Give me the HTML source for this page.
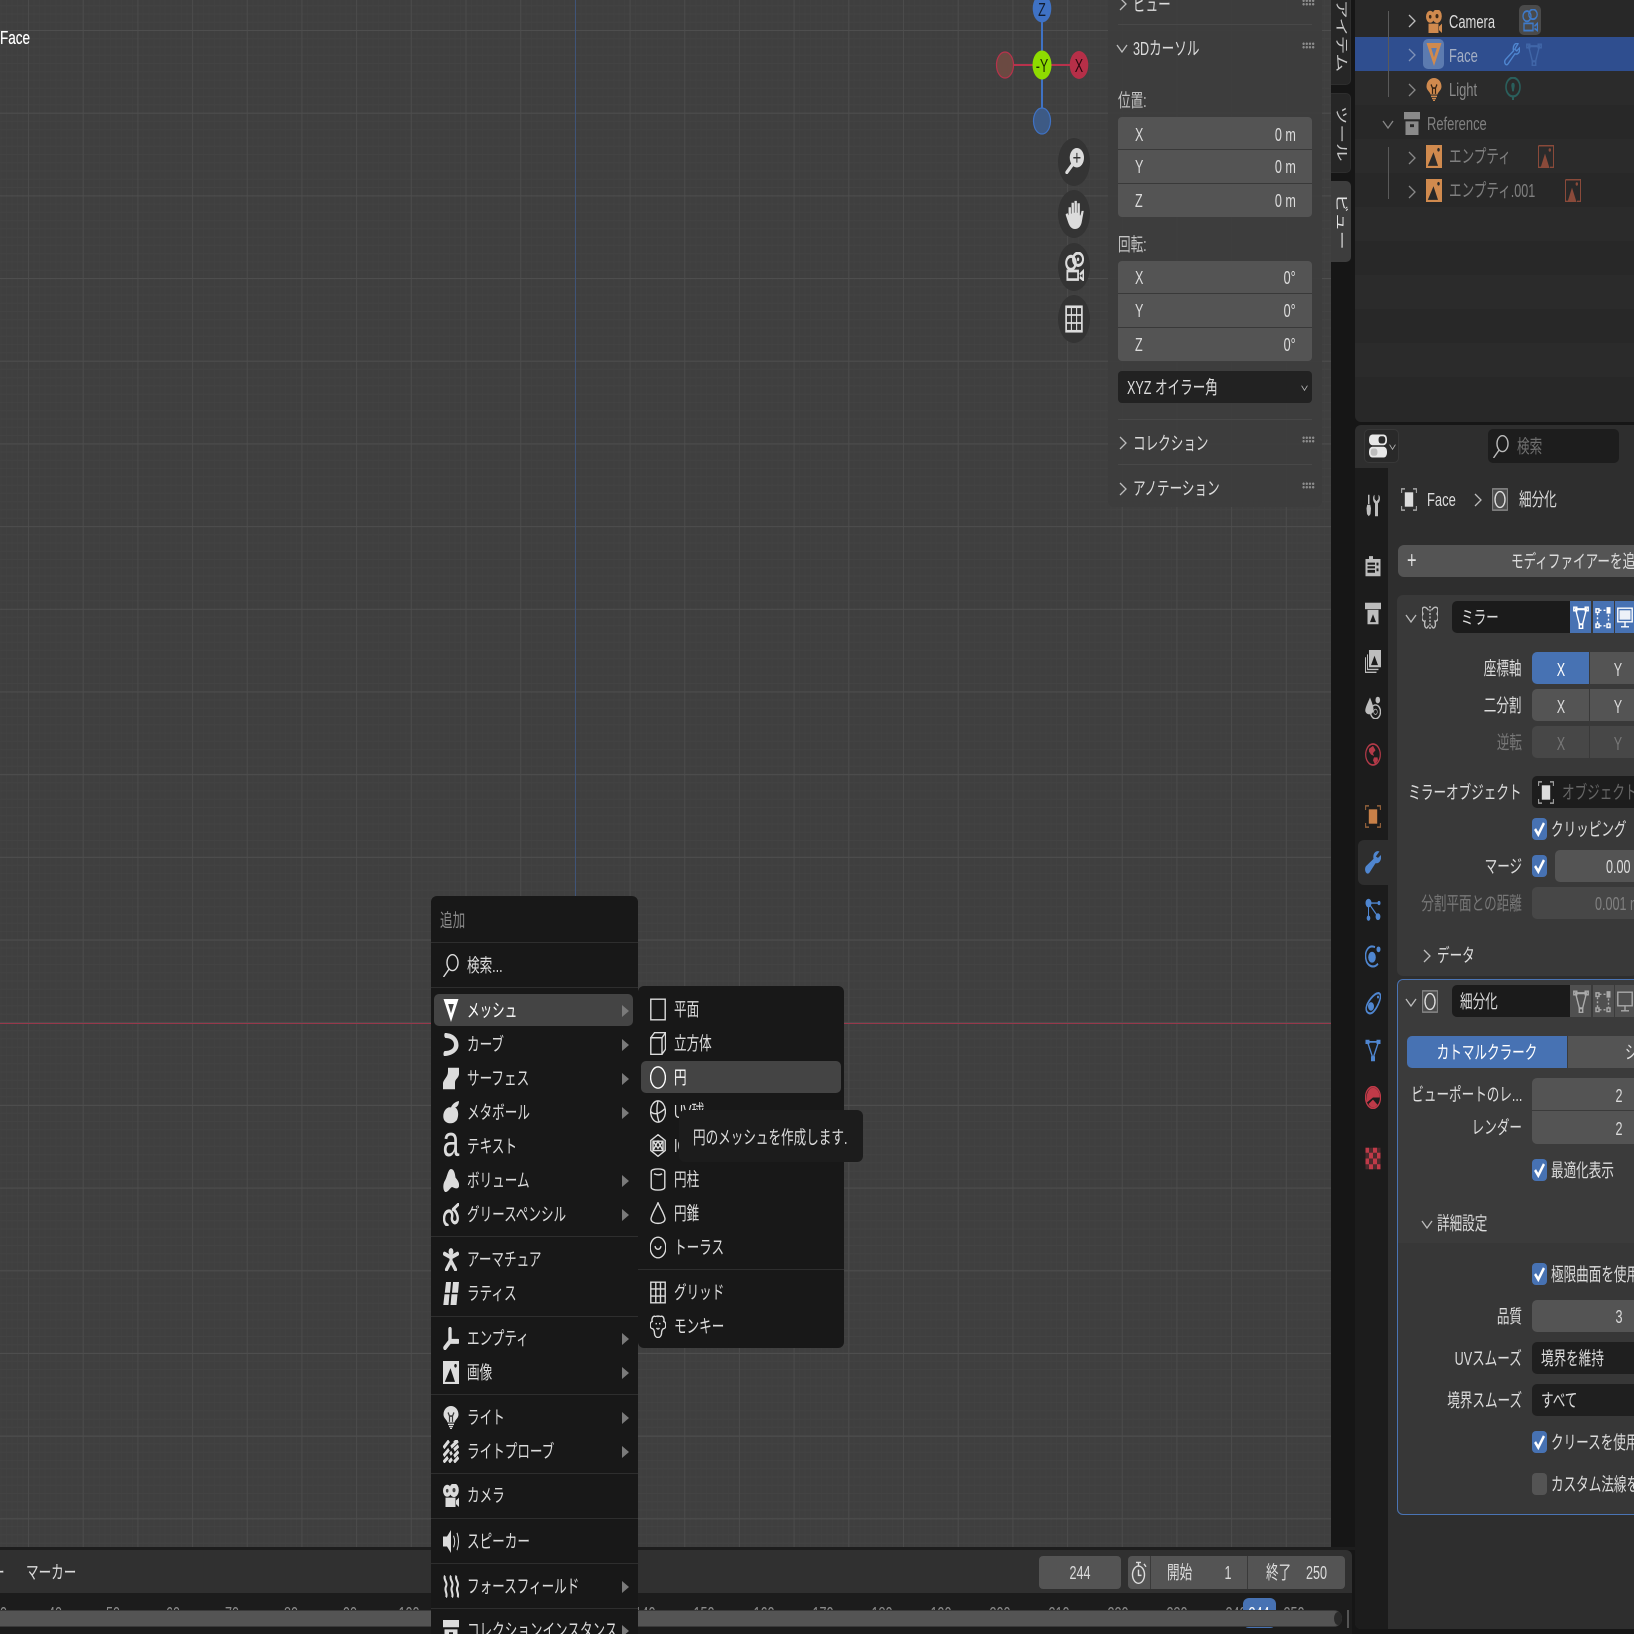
<!DOCTYPE html>
<html lang="ja"><head><meta charset="utf-8"><title>Blender</title>
<style>
html,body{margin:0;padding:0;background:#161616}
#p{position:relative;width:1634px;height:1634px;overflow:hidden;background:#161616;font-family:"Liberation Sans","Noto Sans CJK JP",sans-serif}
i{position:absolute;display:block;font-style:normal}
b{position:absolute;font-weight:400;white-space:nowrap;line-height:24px;height:24px;margin-top:-11.5px;font-size:18.5px;color:#dcdcdc;transform:scaleX(var(--k,.68));transform-origin:0 50%}
b.l{--k:.7}
b.r{transform-origin:100% 50%;text-align:right}
b.c{transform:translateX(-50%) scaleX(var(--k,.68));transform-origin:50% 50%}
b.v{margin:0;transform-origin:0 0;transform:rotate(90deg) scaleY(.7) translateY(-50%);color:#c8c8c8}
.g{color:#8a8a8a}.d{color:#777}
svg.i{position:absolute;width:16px;height:23px;margin:-11.5px 0 0 -8px;color:#dcdcdc;overflow:visible}
svg.ch{position:absolute;width:8px;height:14px;margin:-7px 0 0 -4px;color:#bdbdbd;overflow:visible}
svg.cd{position:absolute;width:12px;height:9px;margin:-4.5px 0 0 -6px;color:#bdbdbd;overflow:visible}
.s{fill:none;stroke:currentColor;stroke-width:1.4;vector-effect:non-scaling-stroke}
.s *{vector-effect:non-scaling-stroke}
.sep{height:1px;background:#2e2e2e;left:431px;width:207px}
.ar{width:0;height:0;border-left:7px solid #7a7a7a;border-top:6px solid transparent;border-bottom:6px solid transparent;left:622px;margin-top:-5px}
.cb{width:15px;height:22px;left:1532px;margin-top:-11px;background:#4772b3;border-radius:4px}
.cb svg{position:absolute;left:1px;top:3px;width:13px;height:16px;overflow:visible}
.f{background:#545454;border-radius:4px}
.dots{width:13px;height:7px;left:1302px;background-image:radial-gradient(#9a9a9a 45%,transparent 50%);background-size:3.200px 3.500px;opacity:.85}
</style></head><body><div id="p">
<svg width="0" height="0" style="position:absolute">
<defs>
<symbol id="tri" viewBox="0 0 16 16" preserveAspectRatio="none"><path fill="currentColor" fill-rule="evenodd" d="M.5 0H15.500L8 16ZM5.200 3.500H10.800L8 10Z"/></symbol>
<symbol id="curve" viewBox="0 0 16 16" preserveAspectRatio="none"><path fill="currentColor" d="M2 0C9 0 15.500 3 15.500 8.500 15.500 13 8 16 1 16 0 15 .5 12.500 2 12.500 7 12.500 11 11 11 8 11 5 7 3.500 2.500 3.500 1 3 1 .5 2 0Z"/></symbol>
<symbol id="surf" viewBox="0 0 16 16" preserveAspectRatio="none"><path fill="currentColor" d="M5 .5H16V5C15.500 8 12 8 12 11V15.500H0V11C1 8 5 7 5 3Z"/></symbol>
<symbol id="meta" viewBox="0 0 16 16" preserveAspectRatio="none"><path fill="currentColor" d="M16 0C16 3 13.500 4.500 12 4.500 15.500 5.500 16 10 14 13 11 16.500 2 16.500 .5 12-.8 7.500 4 3.500 8 4.500 9 2.500 12 .5 16 0Z"/></symbol>
<symbol id="vol" viewBox="0 0 16 16" preserveAspectRatio="none"><path fill="currentColor" d="M8 0C11 0 12 3 12.500 6 15 8 16.800 10 15.800 12.500 14 14.500 11 13 9 12.500 7 13 5 16.500 2 16-.5 14 0 10 2 8 4 6 5 0 8 0Z"/></symbol>
<symbol id="grease" viewBox="0 0 16 16" preserveAspectRatio="none"><path fill="none" stroke="currentColor" stroke-width="2.400" stroke-linecap="round" d="M4.500 15.500C-.5 14 .5 7.500 4 6 7.500 4.500 10 7 9 10 8 13 12.500 15.500 14.500 12 15.500 9 13 6 11 4.500M10 4.500 15.500 .8"/></symbol>
<symbol id="arm" viewBox="0 0 16 16" preserveAspectRatio="none"><circle cx="8" cy="2.500" r="2.400" fill="currentColor"/><path fill="none" stroke="currentColor" stroke-width="3" stroke-linecap="round" d="M1.500 4 8 6.500 14.500 4M8 6V9M8 9 3.500 15M8 9 12.500 15"/></symbol>
<symbol id="lat" viewBox="0 0 16 16" preserveAspectRatio="none"><path fill="currentColor" d="M3 0H8L7 7.500H1.800ZM10 0H16L15 7.500H9ZM1.500 8.500H6.500L5.500 16H.3ZM8.500 8.500H14.500L13.500 16H7.500Z"/></symbol>
<symbol id="empty" viewBox="0 0 16 16" preserveAspectRatio="none"><path fill="none" stroke="currentColor" stroke-width="3.400" stroke-linecap="round" d="M7 1.500V10H15M7 10 2 14.500"/></symbol>
<symbol id="img" viewBox="0 0 16 16" preserveAspectRatio="none"><path fill="currentColor" fill-rule="evenodd" d="M0 0H16V16H0ZM7.500 5 1.800 14.500H12ZM12.500 2A1.300 1.300 0 1 0 12.510 2Z"/></symbol>
<symbol id="imgo" viewBox="0 0 16 16" preserveAspectRatio="none"><path fill="none" stroke="currentColor" stroke-width="1" d="M.5 .5H15.500V15.500H12M5 15.500H.5V.5"/><path fill="currentColor" d="M7 6 2.500 16H11.500Z"/><circle cx="11.800" cy="3.500" r="1.200" fill="currentColor"/></symbol>
<symbol id="bulb" viewBox="0 0 16 16" preserveAspectRatio="none"><path fill="currentColor" d="M8 0C12 0 15.500 2.500 15.500 6 15.500 8.500 12 9.500 11.500 11.500H4.500C4 9.500 .5 8.500 .5 6 .5 2.500 4 0 8 0Z"/><path fill="none" stroke="rgba(0,0,0,.75)" stroke-width="1.200" d="M5 4.500 6.500 7H9.500L11 4.500M6.500 7V11M9.500 7V11"/><path fill="none" stroke="currentColor" stroke-width="1" d="M5 12.800H11M6 14.300H10M7 15.600H9"/></symbol>
<symbol id="ldat" viewBox="0 0 16 16" preserveAspectRatio="none"><ellipse cx="8" cy="7" rx="7" ry="6.500" fill="none" stroke="currentColor" stroke-width="1.600"/><path fill="currentColor" d="M8 4C9.500 4 10 5.500 9.500 7L8.800 10H7.200L6.500 7C6 5.500 6.500 4 8 4ZM7 13H9V16H7Z"/></symbol>
<symbol id="probe" viewBox="0 0 16 16" preserveAspectRatio="none"><path fill="none" stroke="currentColor" stroke-width="2.600" d="M.5 5.500 6 .5M11 2 14 .5M.5 11 6 6.500M8 5 15 .5M.5 15.500 5 12M7 10 9 8.500M11 7 15.500 4M6 15.500 9 13M11 11.500 15.500 8M11 15.500 15.500 12"/></symbol>
<symbol id="cam" viewBox="0 0 16 16" preserveAspectRatio="none"><circle cx="4.200" cy="4.700" r="4.200" fill="currentColor"/><circle cx="11" cy="4.300" r="4.800" fill="currentColor"/><circle cx="4.200" cy="4.700" r="1.300" fill="rgba(0,0,0,.7)"/><circle cx="11" cy="4.300" r="1.500" fill="rgba(0,0,0,.7)"/><path fill="currentColor" d="M2.500 9.500H12.500V16H2.500ZM13 11.500 16 9.500V16L13 14Z"/></symbol>
<symbol id="spk" viewBox="0 0 16 16" preserveAspectRatio="none"><path fill="currentColor" d="M0 4.500H4L8 0V16L4 11.500H0Z"/><path fill="none" stroke="currentColor" stroke-width="1" d="M10.500 4C12 6.500 12 9.500 10.500 12M14 2C16 6 16 10 14 14"/></symbol>
<symbol id="force" viewBox="0 0 16 16" preserveAspectRatio="none"><path fill="none" stroke="currentColor" stroke-width="2" d="M2 .5C0 3 5 5 3 8 1 11 5 13 3 15.500M8 .5C6 3 11 5 9 8 7 11 11 13 9 15.500M13.500 .5C11.500 3 16.500 5 14.500 8 12.500 11 16.500 13 14.500 15.500"/></symbol>
<symbol id="coll" viewBox="0 0 16 16" preserveAspectRatio="none"><path fill="currentColor" fill-rule="evenodd" d="M0 0H16V5H0ZM1.500 6.500H14.500V16H1.500ZM6 8.500V10.500H10V8.500Z"/></symbol>
<symbol id="srch" viewBox="0 0 16 16" preserveAspectRatio="none"><ellipse class="s" cx="9.500" cy="6" rx="5.500" ry="5.500"/><path class="s" d="M6 10.500 .5 16"/></symbol>
<symbol id="plane" viewBox="0 0 16 16" preserveAspectRatio="none"><rect class="s" x=".8" y=".8" width="14.400" height="14.400"/></symbol>
<symbol id="cube" viewBox="0 0 16 16" preserveAspectRatio="none"><path class="s" d="M.8 4H12V15.500H.8ZM.8 4 4.500 .5H15.500V12L12 15.500M12 4 15.500 .5"/></symbol>
<symbol id="circ" viewBox="0 0 16 16" preserveAspectRatio="none"><ellipse class="s" cx="8" cy="8" rx="7.400" ry="7.400"/></symbol>
<symbol id="uv" viewBox="0 0 16 16" preserveAspectRatio="none"><ellipse class="s" cx="8" cy="8" rx="7.400" ry="7.400"/><path class="s" d="M.6 8C4 10.500 9 10 15 6M8 .6C6 6 7 11 9 15.400"/></symbol>
<symbol id="ico" viewBox="0 0 16 16" preserveAspectRatio="none"><path class="s" d="M8 .5 15.200 4.500V11.500L8 15.500 .8 11.500V4.500ZM3 5H13V11.500H3ZM3 5 8 10 13 5M3 11.500 8 5 13 11.500"/></symbol>
<symbol id="cyl" viewBox="0 0 16 16" preserveAspectRatio="none"><path class="s" d="M1.200 2.500C1.200 0 14.800 0 14.800 2.500V13.500C14.800 16 1.200 16 1.200 13.500ZM4 4C7 5 10 5 12 4"/></symbol>
<symbol id="cone" viewBox="0 0 16 16" preserveAspectRatio="none"><path class="s" d="M8 .5C10 4 14 8 15 11.500 15.500 16 .5 16 1 11.500 2 8 6 4 8 .5Z"/></symbol>
<symbol id="tor" viewBox="0 0 16 16" preserveAspectRatio="none"><ellipse class="s" cx="8" cy="8" rx="7.800" ry="7.200"/><path class="s" d="M5 7C6 10 10 10 11 7"/></symbol>
<symbol id="grid" viewBox="0 0 16 16" preserveAspectRatio="none"><rect class="s" x=".8" y=".8" width="14.400" height="14.400"/><path class="s" d="M5.800 .8V15.200M10.500 .8V15.200M.8 5.500H15.200M.8 10.500H15.200"/></symbol>
<symbol id="monk" viewBox="0 0 16 16" preserveAspectRatio="none"><path class="s" d="M4.500 .8C6 1.500 7 .2 8 1 9 .2 10 1.500 11.500 .8 13.500 .8 14.500 3 13.800 4.500 16.500 5 16.500 9.500 13.500 9.500 12 10 11.500 11 11.500 13 11 16.500 5 16.500 4.500 13 4.500 11 4 10 2.500 9.500-.5 9.500-.5 5 2.200 4.500 1.500 3 2.500 .8 4.500 .8Z"/><path class="s" d="M5.500 6H7M9 6H10.500M6.500 9C7.500 10 8.500 10 9.500 9"/></symbol>
<symbol id="tool" viewBox="0 0 16 16" preserveAspectRatio="none"><path fill="currentColor" d="M3 .5H4.500V7H3ZM2.200 7.500H5.300L6 10 5.500 14 3.800 15.500 2 14 1.500 10ZM9.500 .5V3.500L11.500 5 13.500 3.500V.5C15.500 1.500 15.500 5 13 6.500V15.500H10V6.500C7.500 5 7.500 1.500 9.500 .5Z"/></symbol>
<symbol id="rend" viewBox="0 0 16 16" preserveAspectRatio="none"><path fill="currentColor" fill-rule="evenodd" d="M.5 3.500H4V1.500H8V3.500H15.500V15.500H.5ZM2.500 6V13H10V6ZM11.500 6V8H13.500V6ZM11.500 10V12H13.500V10Z"/><path fill="none" stroke="currentColor" d="M2.500 8H10M2.500 10.500H10"/></symbol>
<symbol id="outp" viewBox="0 0 16 16" preserveAspectRatio="none"><path fill="currentColor" d="M0 .5H16V5H0Z"/><path fill="currentColor" fill-rule="evenodd" d="M2.500 5.500H13.500V15.500H2.500ZM8 8.500 5 14H11Z"/></symbol>
<symbol id="vl" viewBox="0 0 16 16" preserveAspectRatio="none"><path fill="currentColor" fill-rule="evenodd" d="M4 0H16V12H4ZM9.500 4 6 10.500H13Z"/><path fill="none" stroke="currentColor" d="M2.500 3V13.500H13.500M.5 5V15.500H11.500"/></symbol>
<symbol id="scn" viewBox="0 0 16 16" preserveAspectRatio="none"><path fill="currentColor" d="M5 1C7 4.500 9 8 8.500 10.500 7 13.500 1.500 13.500 .3 10.500 0 8 3 4.500 5 1Z"/><circle cx="12.800" cy="2.800" r="2.300" fill="currentColor"/><ellipse class="s" cx="10.500" cy="11" rx="5" ry="4.800"/><circle cx="10.500" cy="11" r="1.800" fill="none" stroke="currentColor" stroke-width=".6"/></symbol>
<symbol id="wld" viewBox="0 0 16 16" preserveAspectRatio="none"><circle cx="8" cy="8" r="7.300" fill="none" stroke="currentColor" stroke-width="1.200"/><path fill="currentColor" d="M4 4 8 2 10.500 5 8 7 9 9 6 8 4 6ZM9 10 12.500 10 13 12 10 15 8 12Z"/></symbol>
<symbol id="obj" viewBox="0 0 16 16" preserveAspectRatio="none"><path fill="none" stroke="currentColor" stroke-width="1.100" opacity=".7" d="M.6 3.500V.6H4M12 .6H15.400V3.500M15.400 12.500V15.400H12M4 15.400H.6V12.500"/><rect x="3.800" y="3" width="8.400" height="10" fill="currentColor"/></symbol>
<symbol id="wr" viewBox="0 0 16 16" preserveAspectRatio="none"><path fill="currentColor" d="M14.500 .3C10.500 -.8 7.500 2 8.500 5.500L1 10.500C-1.500 13 1.500 17.500 4.500 15L10.500 8.500C14 9 16.800 6.500 16 2.800L13 4.800 10.800 3.800Z"/></symbol>
<symbol id="wro" viewBox="0 0 16 16" preserveAspectRatio="none"><path class="s" d="M14 .5C11 -.3 8.500 2 9.500 5.500L1.500 11.500C-.5 13.500 2 16.500 4 14.500L11 7.500C14 8.500 16.300 6 15.500 3.500L12.800 5.500 10.800 4.300Z"/></symbol>
<symbol id="part" viewBox="0 0 16 16" preserveAspectRatio="none"><circle cx="3.500" cy="3.500" r="3" fill="currentColor"/><circle cx="13" cy="13" r="2.400" fill="currentColor"/><circle cx="3.500" cy="14" r="1.800" fill="currentColor"/><circle cx="14" cy="3.500" r="1.500" fill="currentColor"/><path fill="none" stroke="currentColor" d="M4 4 13 13M3.500 5V14M5 3.500H14"/></symbol>
<symbol id="phy" viewBox="0 0 16 16" preserveAspectRatio="none"><circle cx="7" cy="8.500" r="3.800" fill="currentColor"/><circle cx="13.500" cy="3" r="2" fill="currentColor"/><path fill="none" stroke="currentColor" stroke-width="1.500" d="M10 1.500C4 -.5 -.5 4 .8 9.500 2 15 9 16.500 13 13"/></symbol>
<symbol id="con" viewBox="0 0 16 16" preserveAspectRatio="none"><path fill="none" stroke="currentColor" stroke-width="1.500" d="M13 .8C9 1 2 7 1.200 11 .8 14.500 5 16 8 14 12 11.500 15.500 5.500 15.500 3 15.500 1.500 14.500 .7 13 .8Z"/><circle cx="6" cy="10" r="3" fill="currentColor"/><circle cx="13" cy="3.500" r="1" fill="currentColor"/></symbol>
<symbol id="dat" viewBox="0 0 16 16" preserveAspectRatio="none"><path fill="none" stroke="currentColor" stroke-width="1.300" d="M2.500 2H13.500L8 13.500Z"/><path fill="currentColor" d="M.5 .5H4.500V3.500H.5ZM11.500 .5H15.500V3.500H11.500ZM6 12H10V15.500H6Z"/></symbol>
<symbol id="mat" viewBox="0 0 16 16" preserveAspectRatio="none"><circle cx="8" cy="8" r="7.500" fill="none" stroke="currentColor" stroke-width="1.200"/><path fill="currentColor" d="M8 1.200C11.500 1.200 14.800 4 14.800 8L8 8 1.800 11.500C.5 7 3 1.200 8 1.200ZM3.500 12.500 8 9.500 12.500 13C10 15.500 5.500 15.500 3.500 12.500Z"/></symbol>
<symbol id="tex" viewBox="0 0 16 16" preserveAspectRatio="none"><rect x=".5" y=".5" width="15" height="15" fill="#4a2a2d"/><path fill="currentColor" d="M.5 .5H4V4H.5ZM8 .5H12V4H8ZM4 4H8V8H4ZM12 4H15.500V8H12ZM.5 8H4V12H.5ZM8 8H12V12H8ZM4 12H8V15.500H4ZM12 12H15.500V15.500H12Z"/></symbol>
<symbol id="mv" viewBox="0 0 16 16" preserveAspectRatio="none"><path class="s" d="M2.500 2H13.500L9.500 13H6.500ZM4.500 2.500H11.500"/><rect class="s" x=".8" y=".8" width="3" height="2.500"/><rect class="s" x="12.200" y=".8" width="3" height="2.500"/><rect class="s" x="6.300" y="12.500" width="3.400" height="3"/></symbol>
<symbol id="me" viewBox="0 0 16 16" preserveAspectRatio="none"><rect class="s" x="1" y="2" width="3" height="2.500"/><rect class="s" x="1" y="12.500" width="3" height="2.500"/><rect class="s" x="12" y="12.500" width="3" height="2.500"/><rect x="11.500" y=".8" width="4" height="4.500" fill="currentColor"/><path class="s" stroke-dasharray="2 2" d="M2.500 5V12M4.500 13.800H11.500M13.500 6V12M4.500 3H11"/></symbol>
<symbol id="mr" viewBox="0 0 16 16" preserveAspectRatio="none"><rect class="s" x=".8" y="1.500" width="14.400" height="9.500"/><path class="s" d="M8 11V14M4 14.500H12"/></symbol>
<symbol id="mrf" viewBox="0 0 16 16" preserveAspectRatio="none"><rect class="s" x=".8" y="1.500" width="14.400" height="9.500"/><rect x="2.500" y="3" width="11" height="6.500" fill="currentColor" opacity=".9"/><path class="s" d="M8 11V14M4 14.500H12"/></symbol>
<symbol id="modb" viewBox="0 0 16 16" preserveAspectRatio="none"><rect x=".6" y=".6" width="14.800" height="14.800" fill="#4c4c4c" stroke="#8a8a8a"/><ellipse class="s" cx="8" cy="8" rx="5" ry="5.500"/></symbol>
<symbol id="fly" viewBox="0 0 16 16" preserveAspectRatio="none"><path class="s" d="M6.500 3C3 -1 -2 1 1 5.500 -1.500 8 .5 11 3 10.500 1.500 15 5 17 6.500 13.500M9.500 3C13 -1 18 1 15 5.500 17.500 8 15.500 11 13 10.500 14.500 15 11 17 9.500 13.500"/><path class="s" stroke-dasharray="2 1.500" d="M8 0V16"/></symbol>
<symbol id="tog" viewBox="0 0 16 16" preserveAspectRatio="none"><rect x="0" y=".3" width="16" height="7.200" rx="3" fill="#e8e8e8"/><rect x="8.500" y="1.500" width="6" height="4.800" rx="2" fill="#2a2a2a"/><rect x="0" y="8.500" width="16" height="7.200" rx="3" fill="#e8e8e8"/><rect x="1.500" y="9.700" width="6" height="4.800" rx="2" fill="#bdbdbd"/></symbol>
<symbol id="zm" viewBox="0 0 16 16" preserveAspectRatio="none"><circle cx="10" cy="6" r="6" fill="currentColor"/><path fill="none" stroke="currentColor" stroke-width="2.400" stroke-linecap="round" d="M6 10.500 1.500 15"/><path fill="none" stroke="#333" stroke-width=".9" d="M7 6H13M10 3V9"/></symbol>
<symbol id="hand" viewBox="0 0 16 16" preserveAspectRatio="none"><path fill="currentColor" d="M3 4H5V7.500H5.500V1.500H7.500V7H8V.5H10V7H10.500V1.800H12.500V8.500H13L14 6H15.800L14 12.500C13 15 11 16 8.500 16 5 16 3.500 14 2.500 12L.5 8 2 7.200 3 8.500Z"/></symbol>
<symbol id="cm2" viewBox="0 0 16 16" preserveAspectRatio="none"><ellipse cx="5" cy="6" rx="4" ry="3.600" fill="none" stroke="currentColor" stroke-width="1.700"/><ellipse cx="11" cy="4" rx="4.200" ry="3.400" fill="none" stroke="currentColor" stroke-width="1.700"/><circle cx="11" cy="4" r="1" fill="currentColor"/><path fill="none" stroke="currentColor" stroke-width="1.500" d="M2 10.500H11V15.200H2ZM12.500 12.500 15.500 10.500V15.500L12.500 13.800"/></symbol>
<symbol id="cmb" viewBox="0 0 16 16" preserveAspectRatio="none"><ellipse cx="5" cy="5" rx="4" ry="3.600" fill="none" stroke="currentColor" stroke-width="1.300"/><ellipse cx="11" cy="3.700" rx="4.200" ry="3.400" fill="none" stroke="currentColor" stroke-width="1.300"/><path fill="none" stroke="currentColor" stroke-width="1.300" d="M2 10H11V15H2ZM12.500 12 15.500 10V15L12.500 13.500"/></symbol>
<symbol id="grd" viewBox="0 0 16 16" preserveAspectRatio="none"><rect x="1" y="1" width="14" height="14" fill="none" stroke="currentColor" stroke-width="1.500"/><path stroke="currentColor" stroke-width="1" fill="none" d="M5.700 1V15M10.300 1V15M1 5.700H15M1 10.300H15"/></symbol>
<symbol id="ck" viewBox="0 0 16 16" preserveAspectRatio="none"><path fill="none" stroke="#fff" stroke-width="3" d="M2.500 8 6.500 13.500 13.500 2"/></symbol>
<symbol id="chr" viewBox="0 0 8 14" preserveAspectRatio="none"><path fill="none" stroke="currentColor" stroke-width="1.300" d="M1 1 7 7 1 13"/></symbol>
<symbol id="chd" viewBox="0 0 12 9" preserveAspectRatio="none"><path fill="none" stroke="currentColor" stroke-width="1.300" d="M1 1 6 8 11 1"/></symbol>
<symbol id="stop" viewBox="0 0 16 16" preserveAspectRatio="none"><circle class="s" cx="7.500" cy="9.500" r="6"/><path class="s" d="M7.500 6V10H10.500M5 1H10M7.500 1V3.500M13 2 15 4"/></symbol>
</defs></svg>

<!-- viewport -->
<i style="left:0;top:0;width:1331px;height:1547px;background-color:#3f3f3f;background-image:linear-gradient(#4e4e4e 1px,transparent 1px),linear-gradient(90deg,#4b4b4b 1px,transparent 1px),linear-gradient(#434343 1px,transparent 1px),linear-gradient(90deg,#414141 1px,transparent 1px);background-size:100% 82.7px,54.7px 100%,100% 8.27px,5.47px 100%;background-position:0 30px,28px 0,0 30px,28px 0"></i>
<i style="left:575px;top:0;width:1px;height:1547px;background:#3f5478"></i>
<i style="left:0;top:1023px;width:1331px;height:1px;background:#97384b"></i>
<b style="left:0;top:37px;color:#fff;--k:.73;text-shadow:0 0 .5px #fff">Face</b>

<!-- gizmo -->
<svg style="position:absolute;left:990px;top:0;width:110px;height:150px;overflow:visible">
<path d="M52 8V121" stroke="#3f72c4" stroke-width="2"/><path d="M15 65H89" stroke="#b8324c" stroke-width="2"/>
<ellipse cx="52" cy="8.500" rx="9.300" ry="14" fill="#3f72c4"/>
<ellipse cx="52" cy="121" rx="8.500" ry="13" fill="#3d5a85" stroke="#3f72c4" stroke-width="1.200"/>
<ellipse cx="15" cy="65" rx="8.500" ry="13" fill="#6b4a42" stroke="#b8324c" stroke-width="1.200"/>
<ellipse cx="89" cy="65" rx="9.300" ry="14" fill="#b62f48"/>
<ellipse cx="52" cy="65" rx="9.500" ry="14.500" fill="#8edc00"/>
</svg>
<b class="c" style="left:1042px;top:9px;color:#111d30">Z</b>
<b class="c" style="left:1042px;top:65px;color:#1a2c00">-Y</b>
<b class="c" style="left:1079px;top:65px;color:#2a070e">X</b>

<!-- nav buttons -->
<i style="left:1058px;top:138px;width:32px;height:48px;border-radius:16px/24px;background:#343434"></i>
<i style="left:1058px;top:190px;width:32px;height:48px;border-radius:16px/24px;background:#343434"></i>
<i style="left:1058px;top:243px;width:32px;height:48px;border-radius:16px/24px;background:#343434"></i>
<i style="left:1058px;top:295px;width:32px;height:48px;border-radius:16px/24px;background:#343434"></i>
<svg class="i" style="left:1074px;top:161px;width:19px;height:26px;margin:-13px 0 0 -9.500px"><use href="#zm"/></svg>
<svg class="i" style="left:1074px;top:214px;width:19px;height:29px;margin:-14.500px 0 0 -9.500px"><use href="#hand"/></svg>
<svg class="i" style="left:1074px;top:266px;width:19px;height:29px;margin:-14.500px 0 0 -9.500px"><use href="#cm2"/></svg>
<svg class="i" style="left:1074px;top:319px;width:18px;height:28px;margin:-14px 0 0 -9px"><use href="#grd"/></svg>

<!-- N panel -->
<i style="left:1108px;top:0;width:214px;height:507px;background:rgba(61,61,61,.95);border-radius:0 0 6px 6px"></i>
<svg class="ch" style="left:1123px;top:4px"><use href="#chr"/></svg><b style="left:1133px;top:4px">ビュー</b><i class="dots" style="top:-1px"></i>
<i style="left:1118px;top:24px;width:194px;height:1px;background:#484848"></i>
<svg class="cd" style="left:1122px;top:48px"><use href="#chd"/></svg><b style="left:1133px;top:48px">3Dカーソル</b><i class="dots" style="top:42px"></i>
<b style="left:1118px;top:100px;color:#c4c4c4">位置:</b>
<i class="f" style="left:1118px;top:117px;width:194px;height:100px"></i>
<i style="left:1118px;top:149px;width:194px;height:1px;background:#393939"></i><i style="left:1118px;top:183px;width:194px;height:1px;background:#393939"></i>
<b style="left:1135px;top:134px">X</b><b style="left:1135px;top:166px">Y</b><b style="left:1135px;top:200px">Z</b>
<b class="r" style="right:338px;top:134px">0 m</b><b class="r" style="right:338px;top:166px">0 m</b><b class="r" style="right:338px;top:200px">0 m</b>
<b style="left:1118px;top:244px;color:#c4c4c4">回転:</b>
<i class="f" style="left:1118px;top:261px;width:194px;height:100px"></i>
<i style="left:1118px;top:293px;width:194px;height:1px;background:#393939"></i><i style="left:1118px;top:327px;width:194px;height:1px;background:#393939"></i>
<b style="left:1135px;top:277px">X</b><b style="left:1135px;top:310px">Y</b><b style="left:1135px;top:344px">Z</b>
<b class="r" style="right:338px;top:277px">0°</b><b class="r" style="right:338px;top:310px">0°</b><b class="r" style="right:338px;top:344px">0°</b>
<i style="left:1118px;top:371px;width:194px;height:32px;background:#222;border-radius:4px"></i>
<b style="left:1127px;top:387px">XYZ オイラー角</b>
<svg class="cd" style="left:1304px;top:388px;width:7px;height:6px;margin:-3px 0 0 -3.500px"><use href="#chd"/></svg>
<i style="left:1118px;top:419px;width:194px;height:1px;background:#484848"></i>
<svg class="ch" style="left:1123px;top:443px"><use href="#chr"/></svg><b style="left:1133px;top:443px">コレクション</b><i class="dots" style="top:436px"></i>
<i style="left:1118px;top:464px;width:194px;height:1px;background:#484848"></i>
<svg class="ch" style="left:1123px;top:489px"><use href="#chr"/></svg><b style="left:1133px;top:488px">アノテーション</b><i class="dots" style="top:482px"></i>

<!-- tab strip -->
<i style="left:1331px;top:0;width:24px;height:1547px;background:#161616"></i>
<i style="left:1331px;top:-6px;width:20px;height:91px;background:#262626;border-radius:0 5px 5px 0;border:1px solid #2e2e2e;border-left:0;box-sizing:border-box"></i>
<i style="left:1331px;top:93px;width:20px;height:80px;background:#262626;border-radius:0 5px 5px 0;border:1px solid #2e2e2e;border-left:0;box-sizing:border-box"></i>
<i style="left:1331px;top:181px;width:20px;height:81px;background:#3d3d3d;border-radius:0 5px 5px 0"></i>
<b class="v" style="left:1341px;top:0">アイテム</b>
<b class="v" style="left:1341px;top:106px">ツール</b>
<b class="v" style="left:1341px;top:194px;color:#e4e4e4">ビュー</b>

<!-- outliner -->
<i style="left:1355px;top:0;width:279px;height:422px;background:#282828;border-radius:0 0 0 6px;overflow:hidden"></i>
<i style="left:1355px;top:71px;width:279px;height:34px;background:#2b2b2b"></i>
<i style="left:1355px;top:139px;width:279px;height:34px;background:#2b2b2b"></i>
<i style="left:1355px;top:207px;width:279px;height:34px;background:#2b2b2b"></i>
<i style="left:1355px;top:275px;width:279px;height:34px;background:#2b2b2b"></i>
<i style="left:1355px;top:343px;width:279px;height:34px;background:#2b2b2b"></i>
<i style="left:1355px;top:37px;width:279px;height:34px;background:#2f4e8f"></i>
<i style="left:1388px;top:11px;width:1px;height:86px;background:#5a5a5a"></i>
<i style="left:1388px;top:147px;width:1px;height:52px;background:#5a5a5a"></i>
<svg class="ch" style="left:1412px;top:21px"><use href="#chr"/></svg>
<svg class="i" style="left:1434px;top:21px;color:#d08a4e"><use href="#cam"/></svg>
<b class="l" style="left:1449px;top:21px">Camera</b>
<i style="left:1519px;top:5px;width:22px;height:30px;background:#4a4a4a;border-radius:5px"></i>
<svg class="i" style="left:1530px;top:20px;color:#3f7ac8"><use href="#cmb"/></svg>
<svg class="ch" style="left:1412px;top:55px;color:#8093b8"><use href="#chr"/></svg>
<i style="left:1423px;top:39px;width:21px;height:30px;background:#5c7bb0;border-radius:5px"></i>
<svg class="i" style="left:1434px;top:54px;color:#d08a4e"><use href="#tri"/></svg>
<b class="l" style="left:1449px;top:55px;color:#a4afc4">Face</b>
<svg class="i" style="left:1512px;top:54px;color:#4f86d0"><use href="#wro"/></svg>
<svg class="i" style="left:1534px;top:54px;color:#4f7bbd;opacity:.55"><use href="#mv"/></svg>
<svg class="ch" style="left:1412px;top:90px;color:#888"><use href="#chr"/></svg>
<svg class="i" style="left:1434px;top:89px;color:#d08a4e"><use href="#bulb"/></svg>
<b class="l" style="left:1449px;top:89px;color:#8a8a8a">Light</b>
<svg class="i" style="left:1513px;top:88px;color:#2a5f5c"><use href="#ldat"/></svg>
<svg class="cd" style="left:1388px;top:124px;color:#888"><use href="#chd"/></svg>
<svg class="i" style="left:1412px;top:123px;color:#8a8a8a"><use href="#coll"/></svg>
<b class="l" style="left:1427px;top:123px;color:#808080">Reference</b>
<svg class="ch" style="left:1412px;top:158px;color:#888"><use href="#chr"/></svg>
<svg class="i" style="left:1434px;top:156px;color:#d08a4e"><use href="#img"/></svg>
<b style="left:1449px;top:156px;color:#808080">エンプティ</b>
<svg class="i" style="left:1546px;top:156px;color:#8a4a3a"><use href="#imgo"/></svg>
<svg class="ch" style="left:1412px;top:192px;color:#888"><use href="#chr"/></svg>
<svg class="i" style="left:1434px;top:190px;color:#d08a4e"><use href="#img"/></svg>
<b style="left:1449px;top:190px;color:#808080">エンプティ.001</b>
<svg class="i" style="left:1573px;top:190px;color:#8a4a3a"><use href="#imgo"/></svg>

<!-- properties -->
<i style="left:1355px;top:425px;width:279px;height:1204px;background:#2e2e2e;border-radius:6px 0 0 6px"></i>
<i style="left:1355px;top:468px;width:33px;height:1161px;background:#1c1c1c;border-radius:0 0 0 6px"></i>
<i style="left:1364px;top:429px;width:35px;height:34px;background:#292929;border-radius:5px;border:1px solid #383838;box-sizing:border-box"></i>
<svg class="i" style="left:1378px;top:446px;width:18px;height:24px;margin:-12px 0 0 -9px"><use href="#tog"/></svg>
<svg class="cd" style="left:1392px;top:447px;width:7px;height:6px;margin:-3px 0 0 -3.500px"><use href="#chd"/></svg>
<i style="left:1488px;top:429px;width:131px;height:34px;background:#1d1d1d;border-radius:5px"></i>
<svg class="i" style="left:1501px;top:446px;color:#bbb"><use href="#srch"/></svg>
<b class="g" style="left:1517px;top:446px;color:#6f6f6f">検索</b>

<!-- prop tabs -->
<i style="left:1358px;top:840px;width:30px;height:45px;background:#2e2e2e;border-radius:6px 0 0 6px"></i>
<svg class="i" style="left:1373px;top:505px;color:#bdbdbd"><use href="#tool"/></svg>
<svg class="i" style="left:1373px;top:565px;color:#bdbdbd"><use href="#rend"/></svg>
<svg class="i" style="left:1373px;top:613px;color:#bdbdbd"><use href="#outp"/></svg>
<svg class="i" style="left:1373px;top:661px;color:#bdbdbd"><use href="#vl"/></svg>
<svg class="i" style="left:1373px;top:707px;color:#bdbdbd"><use href="#scn"/></svg>
<svg class="i" style="left:1373px;top:754px;color:#b33a48"><use href="#wld"/></svg>
<svg class="i" style="left:1373px;top:816px;color:#c88048"><use href="#obj"/></svg>
<svg class="i" style="left:1373px;top:862px;color:#4f86d0"><use href="#wr"/></svg>
<svg class="i" style="left:1373px;top:909px;color:#4f86d0"><use href="#part"/></svg>
<svg class="i" style="left:1373px;top:956px;color:#4f86d0"><use href="#phy"/></svg>
<svg class="i" style="left:1373px;top:1003px;color:#4f86d0"><use href="#con"/></svg>
<svg class="i" style="left:1373px;top:1050px;color:#4f86d0"><use href="#dat"/></svg>
<svg class="i" style="left:1373px;top:1097px;color:#c03a48"><use href="#mat"/></svg>
<svg class="i" style="left:1373px;top:1158px;color:#c03a48"><use href="#tex"/></svg>

<!-- breadcrumb -->
<svg class="i" style="left:1409px;top:499px"><use href="#obj"/></svg>
<b class="l" style="left:1427px;top:499px">Face</b>
<svg class="ch" style="left:1478px;top:500px"><use href="#chr"/></svg>
<svg class="i" style="left:1500px;top:499px"><use href="#modb"/></svg>
<b style="left:1519px;top:499px">細分化</b>

<i class="f" style="left:1398px;top:545px;width:240px;height:32px;border-radius:6px 0 0 6px"></i>
<b style="left:1407px;top:560px;font-size:24px;color:#e0e0e0">+</b>
<b style="left:1511px;top:561px">モディファイアーを追加</b>

<!-- mirror panel -->
<i style="left:1397px;top:595px;width:240px;height:381px;background:#393939;border-radius:6px"></i>
<svg class="cd" style="left:1411px;top:618px"><use href="#chd"/></svg>
<svg class="i" style="left:1430px;top:617px;color:#bdbdbd"><use href="#fly"/></svg>
<i style="left:1452px;top:601px;width:118px;height:32px;background:#1b1b1b;border-radius:5px 0 0 5px"></i>
<b style="left:1461px;top:617px">ミラー</b>
<i style="left:1570px;top:601px;width:21px;height:32px;background:#4772b3"></i>
<i style="left:1593px;top:601px;width:21px;height:32px;background:#4772b3"></i>
<i style="left:1615px;top:601px;width:19px;height:32px;background:#4772b3"></i>
<svg class="i" style="left:1581px;top:617px;color:#fff"><use href="#mv"/></svg>
<svg class="i" style="left:1603px;top:617px;color:#fff"><use href="#me"/></svg>
<svg class="i" style="left:1625px;top:617px;color:#fff"><use href="#mrf"/></svg>

<b class="r" style="right:112px;top:668px">座標軸</b>
<i style="left:1532px;top:652px;width:57px;height:32px;background:#4772b3;border-radius:5px 0 0 5px"></i>
<i style="left:1590px;top:652px;width:44px;height:32px;background:#545454"></i>
<b class="c" style="left:1561px;top:669px;color:#fff">X</b><b class="c" style="left:1618px;top:669px">Y</b>
<b class="r" style="right:112px;top:705px">二分割</b>
<i style="left:1532px;top:689px;width:57px;height:32px;background:#545454;border-radius:5px 0 0 5px"></i>
<i style="left:1590px;top:689px;width:44px;height:32px;background:#545454"></i>
<b class="c" style="left:1561px;top:706px">X</b><b class="c" style="left:1618px;top:706px">Y</b>
<b class="r" style="right:112px;top:742px;color:#777">逆転</b>
<i style="left:1532px;top:726px;width:57px;height:32px;background:#474747;border-radius:5px 0 0 5px"></i>
<i style="left:1590px;top:726px;width:44px;height:32px;background:#474747"></i>
<b class="c" style="left:1561px;top:743px;color:#787878">X</b><b class="c" style="left:1618px;top:743px;color:#787878">Y</b>
<b class="r" style="right:112px;top:792px">ミラーオブジェクト</b>
<i style="left:1532px;top:776px;width:102px;height:32px;background:#1d1d1d;border-radius:5px 0 0 5px"></i>
<svg class="i" style="left:1546px;top:792px"><use href="#obj"/></svg>
<b style="left:1562px;top:792px;color:#666">オブジェクト</b>
<i class="cb" style="top:829px"><svg><use href="#ck"/></svg></i><b style="left:1551px;top:829px">クリッピング</b>
<b class="r" style="right:112px;top:866px">マージ</b>
<i class="cb" style="top:866px"><svg><use href="#ck"/></svg></i>
<i style="left:1555px;top:850px;width:79px;height:32px;background:#545454;border-radius:5px 0 0 5px"></i>
<b style="left:1606px;top:866px">0.00</b>
<b class="r" style="right:112px;top:903px;color:#777">分割平面との距離</b>
<i style="left:1532px;top:887px;width:102px;height:32px;background:#474747;border-radius:5px 0 0 5px"></i>
<b style="left:1595px;top:903px;color:#808080">0.001 m</b>
<svg class="ch" style="left:1427px;top:956px"><use href="#chr"/></svg><b style="left:1437px;top:955px">データ</b>

<!-- subsurf panel -->
<i style="left:1397px;top:979px;width:250px;height:536px;background:#373737;border:1px solid #4a74b4;border-radius:6px;box-sizing:border-box"></i>
<i style="left:1398px;top:980px;width:236px;height:263px;background:#3b3b3b;border-radius:6px 0 0 0"></i>
<svg class="cd" style="left:1411px;top:1002px"><use href="#chd"/></svg>
<svg class="i" style="left:1430px;top:1001px"><use href="#modb"/></svg>
<i style="left:1452px;top:985px;width:118px;height:32px;background:#1b1b1b;border-radius:5px 0 0 5px"></i>
<b style="left:1460px;top:1001px">細分化</b>
<i style="left:1570px;top:985px;width:21px;height:32px;background:#505050"></i>
<i style="left:1593px;top:985px;width:21px;height:32px;background:#505050"></i>
<i style="left:1615px;top:985px;width:19px;height:32px;background:#505050"></i>
<svg class="i" style="left:1581px;top:1001px;color:#aaa"><use href="#mv"/></svg>
<svg class="i" style="left:1603px;top:1001px;color:#aaa"><use href="#me"/></svg>
<svg class="i" style="left:1625px;top:1001px;color:#aaa"><use href="#mr"/></svg>
<i style="left:1407px;top:1036px;width:160px;height:32px;background:#4772b3;border-radius:5px 0 0 5px"></i>
<i style="left:1568px;top:1036px;width:66px;height:32px;background:#545454"></i>
<b class="c" style="left:1487px;top:1052px;color:#fff">カトマルクラーク</b>
<b style="left:1625px;top:1052px">シ</b>
<b class="r" style="right:112px;top:1094px">ビューポートのレ...</b>
<i style="left:1532px;top:1078px;width:102px;height:32px;background:#545454;border-radius:5px 0 0 0"></i>
<b class="c" style="left:1619px;top:1095px">2</b>
<b class="r" style="right:112px;top:1127px">レンダー</b>
<i style="left:1532px;top:1111px;width:102px;height:33px;background:#545454;border-radius:0 0 0 5px"></i>
<b class="c" style="left:1619px;top:1128px">2</b>
<i class="cb" style="top:1170px"><svg><use href="#ck"/></svg></i><b style="left:1551px;top:1170px">最適化表示</b>
<svg class="cd" style="left:1427px;top:1224px"><use href="#chd"/></svg><b style="left:1437px;top:1223px">詳細設定</b>
<i class="cb" style="top:1274px"><svg><use href="#ck"/></svg></i><b style="left:1551px;top:1274px">極限曲面を使用</b>
<b class="r" style="right:112px;top:1316px">品質</b>
<i style="left:1532px;top:1300px;width:102px;height:32px;background:#545454;border-radius:5px 0 0 5px"></i>
<b class="c" style="left:1619px;top:1316px">3</b>
<b class="r" style="right:112px;top:1358px">UVスムーズ</b>
<i style="left:1532px;top:1342px;width:102px;height:32px;background:#1f1f1f;border-radius:5px 0 0 5px"></i>
<b style="left:1541px;top:1358px">境界を維持</b>
<b class="r" style="right:112px;top:1400px">境界スムーズ</b>
<i style="left:1532px;top:1384px;width:102px;height:32px;background:#1f1f1f;border-radius:5px 0 0 5px"></i>
<b style="left:1541px;top:1400px">すべて</b>
<i class="cb" style="top:1442px"><svg><use href="#ck"/></svg></i><b style="left:1551px;top:1442px">クリースを使用</b>
<i class="cb" style="top:1484px;background:#545454"></i><b style="left:1551px;top:1484px">カスタム法線を使用</b>

<!-- timeline -->
<i style="left:0;top:1547px;width:1355px;height:3px;background:#1d1d1d"></i>
<i style="left:0;top:1550px;width:1352px;height:43px;background:#303030;border-radius:0 6px 0 0"></i>
<i style="left:0;top:1593px;width:1352px;height:41px;background:#1c1c1c"></i>
<b style="left:-8px;top:1572px">ー</b>
<b style="left:26px;top:1572px">マーカー</b>
<i class="f" style="left:1039px;top:1556px;width:82px;height:33px"></i>
<b class="c" style="left:1080px;top:1572px">244</b>
<i class="f" style="left:1128px;top:1556px;width:217px;height:33px"></i>
<i style="left:1150px;top:1556px;width:1px;height:33px;background:#3a3a3a"></i><i style="left:1247px;top:1556px;width:1px;height:33px;background:#3a3a3a"></i>
<svg class="i" style="left:1139px;top:1572px"><use href="#stop"/></svg>
<b style="left:1167px;top:1572px">開始</b><b class="c" style="left:1228px;top:1572px">1</b>
<b style="left:1266px;top:1572px">終了</b><b style="left:1306px;top:1572px">250</b>
<b class="c g" style="left:0;top:1613px">30</b><b class="c g" style="left:55px;top:1613px">40</b><b class="c g" style="left:113px;top:1613px">50</b><b class="c g" style="left:173px;top:1613px">60</b><b class="c g" style="left:232px;top:1613px">70</b><b class="c g" style="left:291px;top:1613px">80</b><b class="c g" style="left:350px;top:1613px">90</b><b class="c g" style="left:409px;top:1613px">100</b>
<b class="c g" style="left:645px;top:1613px">140</b><b class="c g" style="left:704px;top:1613px">150</b><b class="c g" style="left:764px;top:1613px">160</b><b class="c g" style="left:823px;top:1613px">170</b><b class="c g" style="left:882px;top:1613px">180</b><b class="c g" style="left:941px;top:1613px">190</b><b class="c g" style="left:1000px;top:1613px">200</b><b class="c g" style="left:1059px;top:1613px">210</b><b class="c g" style="left:1118px;top:1613px">220</b><b class="c g" style="left:1177px;top:1613px">230</b><b class="c g" style="left:1236px;top:1613px">240</b><b class="c g" style="left:1294px;top:1613px">250</b>
<i style="left:1243px;top:1598px;width:33px;height:30px;background:#4772b3;border-radius:6px"></i>
<b class="c" style="left:1259px;top:1613px;color:#fff">244</b>
<i style="left:0;top:1610px;width:1342px;height:17px;background:#545454;border-top:1px solid #3a3a3a;border-bottom:1px solid #3a3a3a;border-radius:0 8px 8px 0;box-sizing:border-box"></i>
<i style="left:1334px;top:1612px;width:8px;height:13px;background:#2a2a2a;border-radius:50%"></i>
<i style="left:1347px;top:1610px;width:2px;height:18px;background:#555"></i>

<!-- menu -->
<i style="left:431px;top:896px;width:207px;height:760px;background:#181818;border-radius:6px 6px 0 0"></i>
<b style="left:440px;top:920px;color:#8a8a8a">追加</b>
<i class="sep" style="top:942px"></i>
<svg class="i" style="left:451px;top:965px"><use href="#srch"/></svg><b style="left:467px;top:965px">検索...</b>
<i class="sep" style="top:987px"></i>
<i style="left:434px;top:994px;width:199px;height:32px;background:#444;border-radius:5px"></i>
<svg class="i" style="left:451px;top:1010px;color:#fff"><use href="#tri"/></svg><b style="left:467px;top:1010px;color:#fff">メッシュ</b><i class="ar" style="top:1010px"></i>
<svg class="i" style="left:451px;top:1044px"><use href="#curve"/></svg><b style="left:467px;top:1044px">カーブ</b><i class="ar" style="top:1044px"></i>
<svg class="i" style="left:451px;top:1078px"><use href="#surf"/></svg><b style="left:467px;top:1078px">サーフェス</b><i class="ar" style="top:1078px"></i>
<svg class="i" style="left:451px;top:1112px"><use href="#meta"/></svg><b style="left:467px;top:1112px">メタボール</b><i class="ar" style="top:1112px"></i>
<b class="c" style="left:451px;top:1142px;font-size:44px;line-height:44px;height:44px;margin-top:-22px">a</b><b style="left:467px;top:1146px">テキスト</b>
<svg class="i" style="left:451px;top:1180px"><use href="#vol"/></svg><b style="left:467px;top:1180px">ボリューム</b><i class="ar" style="top:1180px"></i>
<svg class="i" style="left:451px;top:1214px"><use href="#grease"/></svg><b style="left:467px;top:1214px">グリースペンシル</b><i class="ar" style="top:1214px"></i>
<i class="sep" style="top:1236px"></i>
<svg class="i" style="left:451px;top:1259px"><use href="#arm"/></svg><b style="left:467px;top:1259px">アーマチュア</b>
<svg class="i" style="left:451px;top:1293px"><use href="#lat"/></svg><b style="left:467px;top:1293px">ラティス</b>
<i class="sep" style="top:1316px"></i>
<svg class="i" style="left:451px;top:1338px"><use href="#empty"/></svg><b style="left:467px;top:1338px">エンプティ</b><i class="ar" style="top:1338px"></i>
<svg class="i" style="left:451px;top:1372px"><use href="#img"/></svg><b style="left:467px;top:1372px">画像</b><i class="ar" style="top:1372px"></i>
<i class="sep" style="top:1394px"></i>
<svg class="i" style="left:451px;top:1417px"><use href="#bulb"/></svg><b style="left:467px;top:1417px">ライト</b><i class="ar" style="top:1417px"></i>
<svg class="i" style="left:451px;top:1451px"><use href="#probe"/></svg><b style="left:467px;top:1451px">ライトプローブ</b><i class="ar" style="top:1451px"></i>
<i class="sep" style="top:1473px"></i>
<svg class="i" style="left:451px;top:1495px"><use href="#cam"/></svg><b style="left:467px;top:1495px">カメラ</b>
<i class="sep" style="top:1518px"></i>
<svg class="i" style="left:451px;top:1541px"><use href="#spk"/></svg><b style="left:467px;top:1541px">スピーカー</b>
<i class="sep" style="top:1563px"></i>
<svg class="i" style="left:451px;top:1586px"><use href="#force"/></svg><b style="left:467px;top:1586px">フォースフィールド</b><i class="ar" style="top:1586px"></i>
<i class="sep" style="top:1608px"></i>
<svg class="i" style="left:451px;top:1631px"><use href="#coll"/></svg><b style="left:467px;top:1630px">コレクションインスタンス</b><i class="ar" style="top:1630px"></i>

<!-- submenu -->
<i style="left:638px;top:986px;width:206px;height:362px;background:#181818;border-radius:6px"></i>
<i style="left:641px;top:1061px;width:200px;height:32px;background:#444;border-radius:5px"></i>
<svg class="i" style="left:658px;top:1009px"><use href="#plane"/></svg><b style="left:674px;top:1009px">平面</b>
<svg class="i" style="left:658px;top:1043px"><use href="#cube"/></svg><b style="left:674px;top:1043px">立方体</b>
<svg class="i" style="left:658px;top:1077px;color:#fff"><use href="#circ"/></svg><b style="left:674px;top:1077px;color:#fff">円</b>
<svg class="i" style="left:658px;top:1111px"><use href="#uv"/></svg><b style="left:674px;top:1111px">UV球</b>
<svg class="i" style="left:658px;top:1145px"><use href="#ico"/></svg><b style="left:674px;top:1145px">ICO球</b>
<svg class="i" style="left:658px;top:1179px"><use href="#cyl"/></svg><b style="left:674px;top:1179px">円柱</b>
<svg class="i" style="left:658px;top:1213px"><use href="#cone"/></svg><b style="left:674px;top:1213px">円錐</b>
<svg class="i" style="left:658px;top:1247px"><use href="#tor"/></svg><b style="left:674px;top:1247px">トーラス</b>
<i style="left:638px;top:1269px;width:206px;height:1px;background:#2e2e2e"></i>
<svg class="i" style="left:658px;top:1292px"><use href="#grid"/></svg><b style="left:674px;top:1292px">グリッド</b>
<svg class="i" style="left:658px;top:1326px"><use href="#monk"/></svg><b style="left:674px;top:1326px">モンキー</b>

<!-- tooltip -->
<i style="left:679px;top:1110px;width:184px;height:52px;background:#1c1c1c;border-radius:6px"></i>
<b style="left:693px;top:1137px">円のメッシュを作成します.</b>
</div></body></html>
